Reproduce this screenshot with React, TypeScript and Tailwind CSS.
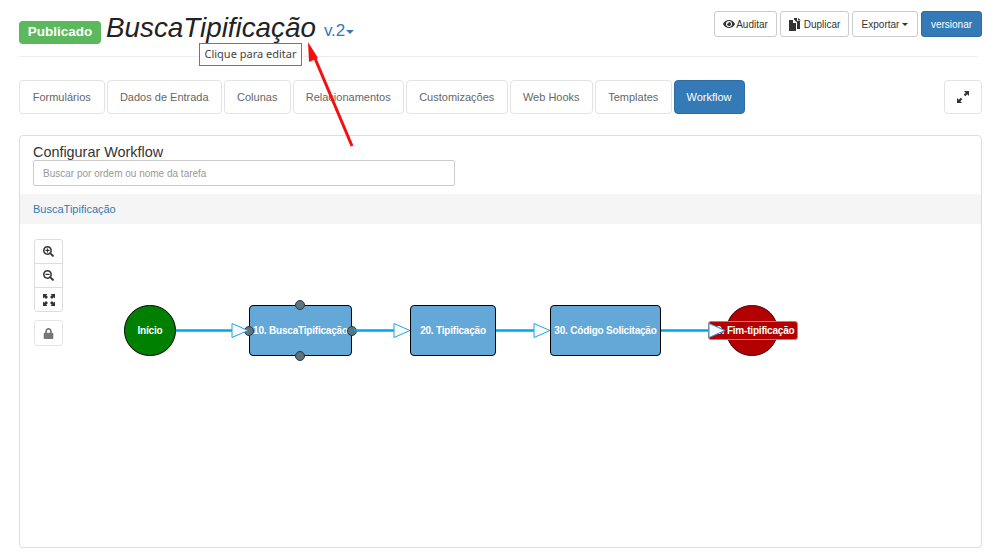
import { FaEye, FaSearchPlus, FaSearchMinus, FaLock } from "react-icons/fa";

const tabs = [
  { label: "Formulários", w: "w-[85.500px]" },
  { label: "Dados de Entrada", w: "w-[115.500px]" },
  { label: "Colunas", w: "w-[66.500px]" },
  { label: "Relacionamentos", w: "w-[111.500px]" },
  { label: "Customizações", w: "w-[101.500px]" },
  { label: "Web Hooks", w: "w-[83.500px]" },
  { label: "Templates", w: "w-[76.500px]" },
];

function DuplicateIcon() {
  return (
    <svg width="13" height="13" viewBox="0 0 13 13" fill="currentColor">
      <path d="M0 2h4v3h3v8H0z" />
      <path d="M5 2V0h3v3h3v8H8V4.500L5.500 2z" />
      <path d="M9 0l3 2.500H9z" />
    </svg>
  );
}

function ResizeIcon() {
  return (
    <svg width="12" height="12" viewBox="0 0 12 12" fill="currentColor">
      <path d="M7 0h5v5l-1.700-1.700-2 2-1.600-1.600 2-2z" />
      <path d="M5 12H0V7l1.700 1.700 2-2 1.600 1.600-2 2z" />
    </svg>
  );
}

function FullscreenIcon() {
  return (
    <svg width="12" height="12" viewBox="0 0 12 12" fill="currentColor">
      <path d="M0 0h4.500L3.200 1.300 5 3.100 3.100 5 1.300 3.200 0 4.500z" />
      <path d="M12 0v4.500L10.700 3.200 8.900 5 7 3.100l1.800-1.800L7.500 0z" />
      <path d="M0 12V7.500l1.300 1.300L3.100 7 5 8.900l-1.800 1.800L4.500 12z" />
      <path d="M12 12H7.500l1.300-1.300L7 8.900 8.900 7l1.800 1.800L12 7.500z" />
    </svg>
  );
}

function Port({ className }: { className: string }) {
  return <span className={`absolute w-[10px] h-[10px] rounded-full bg-[#5a7486] border border-[#333] ${className}`} />;
}

function Task({ label, className, children }: { label: string; className: string; children?: React.ReactNode }) {
  return (
    <div className={`absolute top-[81px] h-[51px] flex items-center justify-center rounded-[4px] bg-[#64a8d8] border border-black text-white text-[10px] tracking-[-0.2px] font-bold whitespace-nowrap ${className}`}>
      {label}
      {children}
    </div>
  );
}

function Arrowhead({ x }: { x: number }) {
  return <polygon points={`${x},99.500 ${x + 16},106.500 ${x},113.500`} fill="#f7fbfe" stroke="#1ea7e8" strokeWidth="1" />;
}

export default function App() {
  return (
    <div className="relative w-[997px] h-[555px] overflow-hidden bg-white px-[19px] text-[#333] font-['Liberation_Sans',Arial,sans-serif]">
      {/* Header */}
      <div className="flex items-start justify-between h-[57px] border-b border-[#eeeeee]">
        <div className="flex items-start h-[56px]">
          <span className="mt-[21px] w-[82px] h-[23px] flex items-center justify-center rounded-[4px] bg-[#5cb85c] text-white text-[13.500px] font-bold">Publicado</span>
          <h1 className="ml-[5px] mt-[7px] text-[27.800px] italic font-normal text-[#222]">BuscaTipificação</h1>
          <span className="ml-[8px] mt-[18px] text-[17px] text-[#337ab7]">v.2</span>
          <span className="mt-[30px] ml-[1px] w-0 h-0 border-x-[4px] border-x-transparent border-t-[4px] border-t-[#337ab7]" />
        </div>
        <div className="flex items-center gap-[3px] mt-[11px] mr-[-4px] text-[10px]">
          <button className="h-[26px] w-[63px] flex items-center justify-center gap-[1px] rounded-[3px] border border-[#ccc] bg-white"><FaEye className="text-[12px]" />Auditar</button>
          <button className="h-[26px] w-[69px] flex items-center justify-center gap-[2px] rounded-[3px] border border-[#ccc] bg-white"><DuplicateIcon />Duplicar</button>
          <button className="h-[26px] w-[66px] flex items-center justify-center gap-[3px] rounded-[3px] border border-[#ccc] bg-white">
            Exportar
            <span className="w-0 h-0 border-x-[3px] border-x-transparent border-t-[3px] border-t-[#333]" />
          </button>
          <button className="h-[26px] w-[61px] flex items-center justify-center rounded-[3px] border border-[#2e6da4] bg-[#337ab7] text-white">versionar</button>
        </div>
      </div>

      {/* Tabs */}
      <div className="flex items-center justify-between mt-[23px]">
        <div className="flex gap-[2px]">
          {tabs.map((tab) => (
            <div key={tab.label} className={`h-[34px] ${tab.w} flex items-center justify-center pt-[1px] rounded-[4px] border border-[#e3e3e3] text-[11px] text-[#666]`}>
              {tab.label}
            </div>
          ))}
          <div className="h-[34px] w-[71px] flex items-center justify-center pt-[1px] rounded-[4px] bg-[#337ab7] border border-[#2e6da4] text-white text-[11px]">Workflow</div>
        </div>
        <button className="h-[34px] w-[38px] mr-[-4px] flex items-center justify-center rounded-[4px] border border-[#e3e3e3] text-[#333]"><ResizeIcon /></button>
      </div>

      {/* Panel */}
      <div className="mt-[21px] mr-[-4px] h-[413px] rounded-[4px] border border-[#dddddd] flex flex-col">
        <div className="pl-[13px] pt-[8px] h-[58px]">
          <h2 className="text-[14.400px] leading-[16px] font-normal text-[#333]">Configurar Workflow</h2>
          <input
            readOnly
            placeholder="Buscar por ordem ou nome da tarefa"
            className="block w-[422px] h-[26px] px-[9px] rounded-[2px] border border-[#ccc] text-[10px] placeholder:text-[#999] outline-none"
          />
        </div>
        <div className="h-[30px] flex items-center pl-[13px] bg-[#f5f5f5] text-[11px] text-[#337ab7]">BuscaTipificação</div>

        {/* Canvas */}
        <div className="relative flex-1">
          <div className="absolute left-[14px] top-[15px] w-[29px] rounded-[3px] border border-[#ddd] flex flex-col text-[#333]">
            <div className="h-[24px] flex items-center justify-center border-b border-[#ddd]"><FaSearchPlus className="text-[11px]" /></div>
            <div className="h-[24px] flex items-center justify-center border-b border-[#ddd]"><FaSearchMinus className="text-[11px]" /></div>
            <div className="h-[23px] flex items-center justify-center"><FullscreenIcon /></div>
          </div>
          <div className="absolute left-[14px] top-[96px] w-[29px] h-[26px] rounded-[3px] border border-[#e5e5e5] flex items-center justify-center text-[#777]"><FaLock className="text-[11px]" /></div>

          <div className="absolute left-[104px] top-[81px] w-[52px] h-[51px] rounded-full bg-[#008000] border border-black flex items-center justify-center text-white text-[10px] tracking-[-0.2px] font-bold">Início</div>

          <Task label="10. BuscaTipificação" className="left-[229px] w-[103px]">
            <Port className="left-[45px] top-[-6px]" />
            <Port className="left-[-6px] top-[20px]" />
            <Port className="right-[-6px] top-[20px]" />
            <Port className="left-[45px] bottom-[-6px]" />
          </Task>
          <Task label="20. Tipificação" className="left-[390px] w-[86px]" />
          <Task label="30. Código Solicitação" className="left-[530px] w-[111px]" />

          <div className="absolute left-[706px] top-[81px] w-[52px] h-[51px] rounded-full bg-[#b30000] border border-[#400]" />
          <div className="absolute left-[688px] top-[97px] w-[90px] h-[19px] rounded-[3px] bg-[#b30000] border border-[#d87070] flex items-center pl-[2px] text-white text-[10px] tracking-[-0.2px] font-bold whitespace-nowrap">40. Fim-tipificação</div>

          <svg className="absolute left-0 top-0 pointer-events-none" width="800" height="200">
            <line x1="156" y1="106.500" x2="212" y2="106.500" stroke="#00a5ee" strokeWidth="2.500" />
            <line x1="334" y1="106.500" x2="374" y2="106.500" stroke="#00a5ee" strokeWidth="2.500" />
            <line x1="476" y1="106.500" x2="514" y2="106.500" stroke="#00a5ee" strokeWidth="2.500" />
            <line x1="641" y1="106.500" x2="690" y2="106.500" stroke="#00a5ee" strokeWidth="2.500" />
            <Arrowhead x={212} />
            <Arrowhead x={374} />
            <Arrowhead x={514} />
            <Arrowhead x={689} />
          </svg>
        </div>
      </div>

      {/* Tooltip and annotation */}
      <div className="absolute left-[199px] top-[43px] w-[103px] h-[23px] flex items-center justify-center bg-white border border-[#767676] text-[11px] text-[#444] font-['Noto_Sans',sans-serif]">Clique para editar</div>
      <svg className="absolute left-0 top-0 pointer-events-none" width="997" height="555">
        <line x1="352" y1="146" x2="314" y2="56" stroke="#f40f0f" strokeWidth="3" />
        <polygon points="308,42 318,58 309,62" fill="#f40f0f" />
      </svg>
    </div>
  );
}
